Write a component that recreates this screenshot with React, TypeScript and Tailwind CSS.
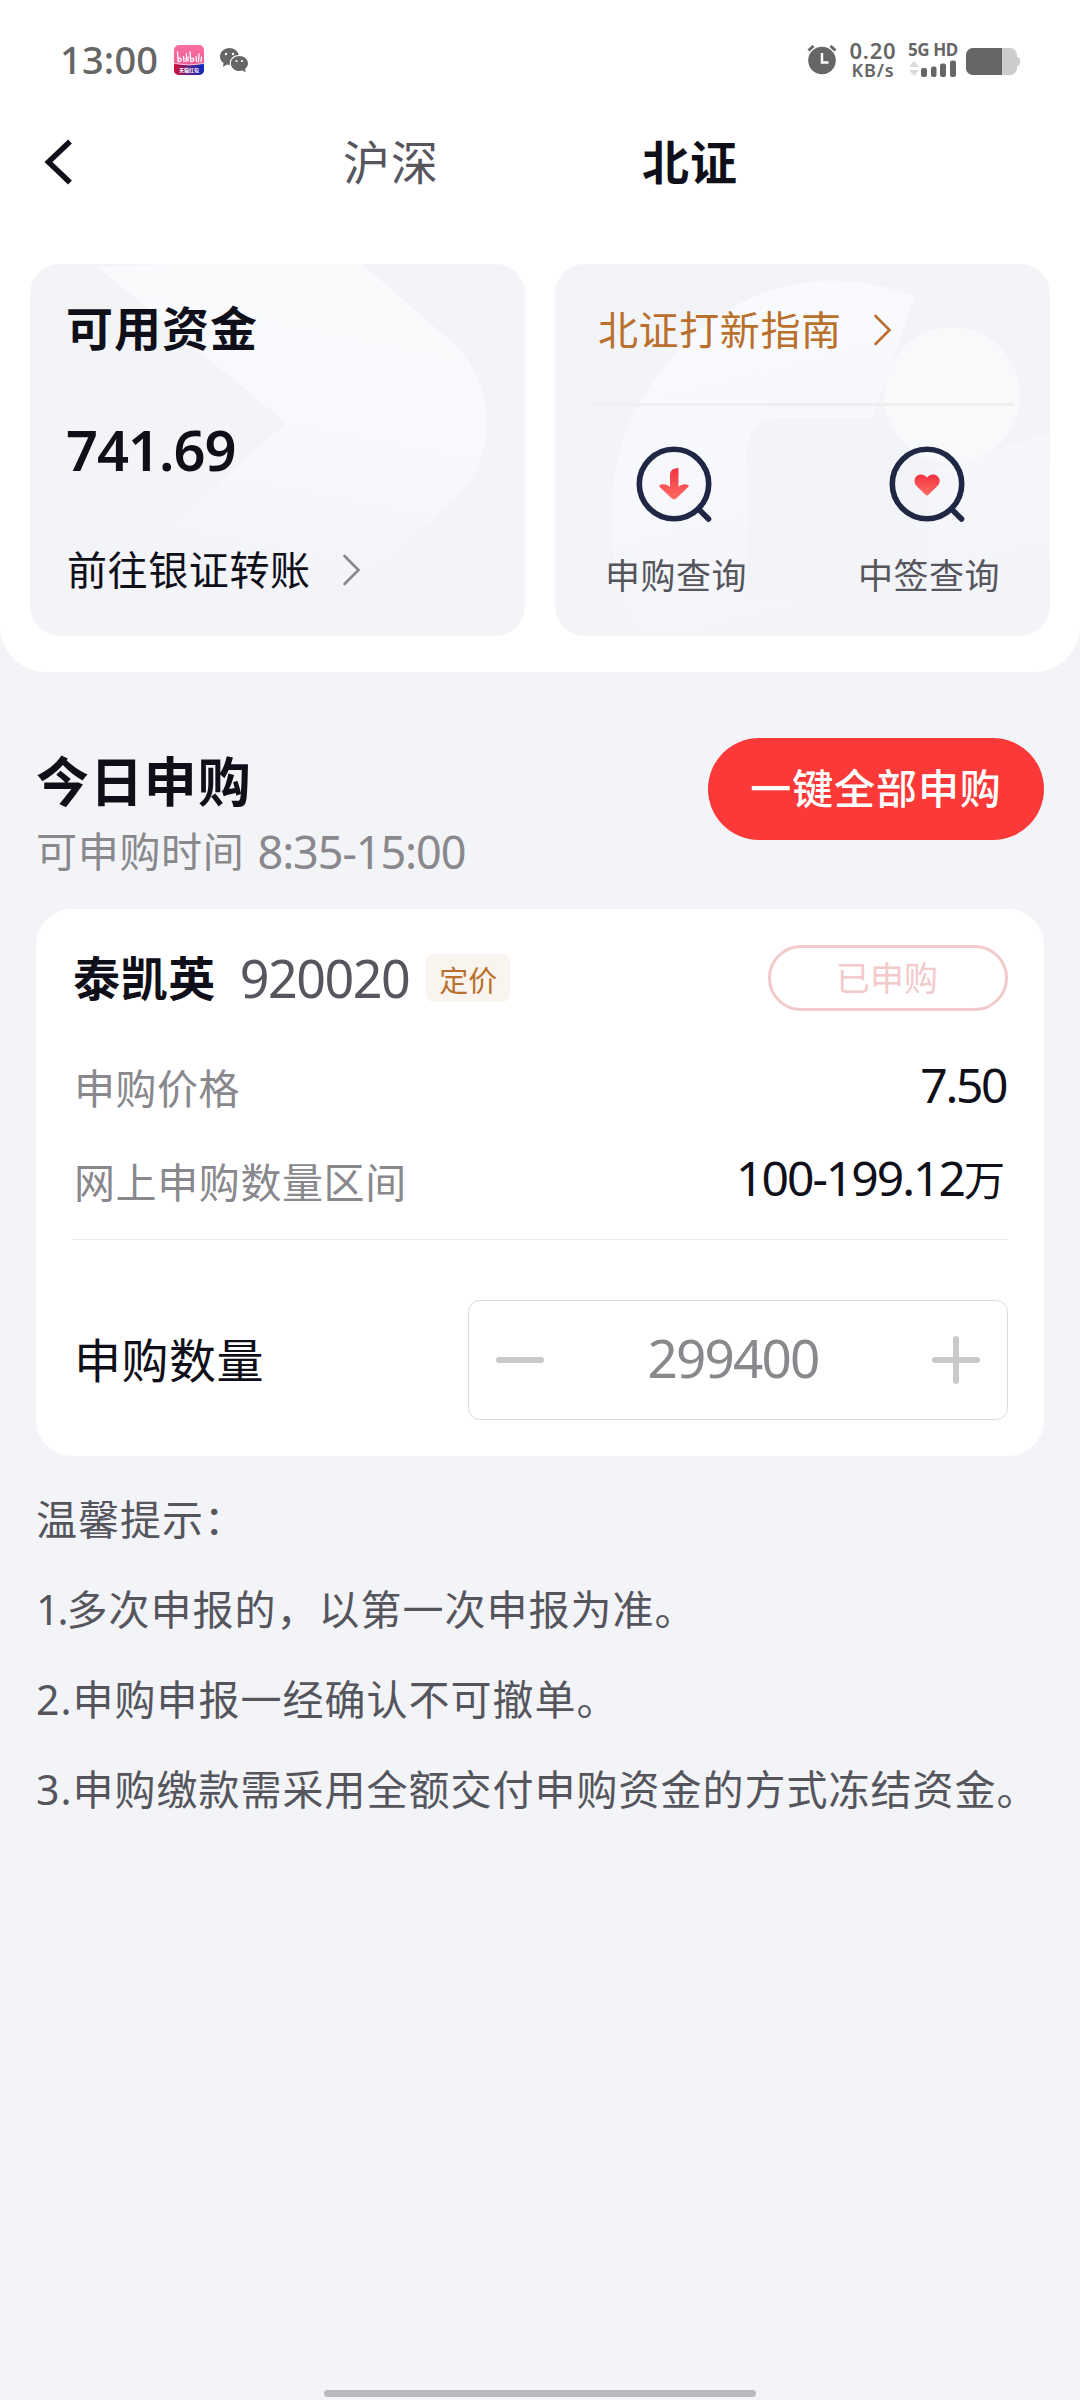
import React from "react";

const CJK = "font-['Noto_Sans','Noto_Sans_CJK_SC',sans-serif]";

function StatusBar() {
  return (
    <div className="flex h-[120px] items-start pt-[39px] pl-[60px] text-[#666]">
      <div className="h-10 w-[114px] text-[38px] leading-10 font-medium tracking-[0.2px]">13:00</div>
      <svg className="mt-[6px] h-[30px] w-[30px]" viewBox="0 0 30 30">
        <defs>
          <linearGradient id="pink" x1="0" y1="0" x2="0" y2="1">
            <stop offset="0" stopColor="#fb6fa0" />
            <stop offset="1" stopColor="#f0508c" />
          </linearGradient>
          <linearGradient id="ribbon" x1="0" y1="0" x2="1" y2="0">
            <stop offset="0" stopColor="#d90a35" />
            <stop offset="0.5" stopColor="#5a1c86" />
            <stop offset="1" stopColor="#0a2fc4" />
          </linearGradient>
          <clipPath id="tile">
            <rect width="30" height="30" rx="5" />
          </clipPath>
        </defs>
        <g clipPath="url(#tile)">
          <rect width="30" height="30" fill="url(#pink)" />
          <path d="M0 18.500Q15 21.500 30 18.500V30H0Z" fill="url(#ribbon)" />
          <path d="M0 18.500Q15 21.500 30 18.500" fill="none" stroke="#fff" strokeWidth="0.7" />
          <g fill="none" stroke="#fff" strokeWidth="1.300" strokeLinecap="round">
            <path d="M3.500 7l.7 9.500M4.200 16.500c4 .5 4-4.500 0-3M9.500 11.500l.5 5M12.500 9l-.5 7.500M16 7l.7 9.500M16.700 16.500c4 .5 4-4.500 0-3M22 11.500l.5 5M25 9l-.5 7.500M27.500 12l-.5 4.500M14 12v4" />
          </g>
        </g>
        <text x="15" y="27" textAnchor="middle" fontSize="5" fontWeight="700" fill="#fff">天猫红包</text>
      </svg>
      <svg className="mt-[9px] ml-4 h-6 w-7" viewBox="0 0 28 24">
        <path d="M9.500 0C4.200 0 0 3.800 0 8.500c0 2.700 1.400 5 3.500 6.500L3 19l4-2.500c1 .3 2 .4 3 .4C9 11.500 13 7 18.800 7 18 3 14 0 9.500 0Z" fill="#666" />
        <path d="M19.300 8c-4.700 0-8.400 3.300-8.400 7.500s3.700 7.600 8.400 7.600c1.100 0 2-.2 3-.5l3.400 1.700-.7-3.300c1.800-1.400 3-3.300 3-5.500 0-4.200-4-7.500-8.700-7.500Z" fill="#666" />
        <g fill="#fff">
          <circle cx="6" cy="6" r="1.200" /><circle cx="13" cy="6" r="1.200" />
          <circle cx="16.500" cy="13" r="1.100" /><circle cx="22" cy="13" r="1.100" />
        </g>
      </svg>
      <svg className="mt-[6px] ml-[559px] h-[30px] w-[30px]" viewBox="0 0 30 30">
        <circle cx="15" cy="15.500" r="13.800" fill="#666" />
        <path d="M1.500 5.500l5-4.500M23.500 1l5 4.500" stroke="#666" strokeWidth="3" />
        <path d="M15 8v9.500h6.500" fill="none" stroke="#fff" strokeWidth="2.500" />
      </svg>
      <div className="mt-px ml-[10px] flex w-[52px] flex-col items-center font-semibold">
        <span className="text-[22px] leading-[20px] tracking-[0.800px]">0.20</span>
        <span className="text-[18px] leading-[20px] tracking-[0.900px]">KB/s</span>
      </div>
      <div className="ml-[8px] w-[50px]">
        <div className="pl-px text-[17px] leading-[21px] font-bold tracking-[-0.400px] whitespace-nowrap">5G HD</div>
        <svg className="h-[18px] w-[50px]" viewBox="0 0 50 18">
          <path d="M2 7l5-6 5 6ZM2 10h10l-5 6Z" fill="#d9d9d9" />
          <g fill="#666">
            <rect x="14" y="8" width="6" height="9" rx="2" />
            <rect x="24" y="6.500" width="5.500" height="10.500" rx="2" />
            <rect x="33" y="3.500" width="6" height="13.500" rx="2" />
            <rect x="43" y="0.500" width="6" height="16.500" rx="2" />
          </g>
        </svg>
      </div>
      <div className="mt-[9px] ml-[9px] flex items-center">
        <div className="h-[27px] w-[51px] overflow-hidden rounded-[7px] bg-[#ccc]">
          <div className="h-full w-9 bg-[#666]" />
        </div>
        <div className="h-[9px] w-[3px] rounded-r bg-[#ccc]" />
      </div>
    </div>
  );
}

function Chevron({ color }: { color: string }) {
  return (
    <svg className="h-[34px] w-[20px]" viewBox="0 0 20 34" fill="none" stroke={color} strokeWidth="2.600" strokeLinecap="round">
      <path d="M2.500 3l14 14-14 14" />
    </svg>
  );
}

function FundsCard() {
  return (
    <div className="relative h-[372px] w-[495px] overflow-hidden rounded-[30px] bg-[#f3f4f8]">
      <svg className="absolute inset-0 h-full w-full" viewBox="0 0 495 372">
        <defs>
          <linearGradient id="fade1" gradientUnits="userSpaceOnUse" x1="280" y1="60" x2="230" y2="310">
            <stop offset="0" stopColor="#f9fafc" />
            <stop offset="0.400" stopColor="#f7f9fc" />
            <stop offset="1" stopColor="#f3f4f8" />
          </linearGradient>
        </defs>
        <path d="M68 3L140 0H332L417 74C445 98 457 128 457 159C457 195 440 225 412 248L300 345L100 300L256 159Z" fill="url(#fade1)" />
      </svg>
      <div className="relative pl-[37px] text-[#0f0f19]">
        <div className="-ml-px mt-[34px] h-[60px] text-[47px] leading-[60px] font-semibold tracking-[1px]">可用资金</div>
        <div className="-ml-px mt-[61px] h-[60px] text-[56px] leading-[60px] font-semibold tracking-[-1px]">741.69</div>
        <div className="mt-[61px] flex h-[60px] items-center">
          <span className="text-[40px] leading-[60px] tracking-[0.600px]">前往银证转账</span>
          <span className="ml-[31px]"><Chevron color="#88888d" /></span>
        </div>
      </div>
    </div>
  );
}

function Lens({ kind }: { kind: "arrow" | "heart" }) {
  return (
    <svg className="h-[80px] w-[80px]" viewBox="0 0 80 80">
      <defs>
        <linearGradient id="red" x1="0" y1="0" x2="0" y2="1">
          <stop offset="0" stopColor="#f3323f" />
          <stop offset="1" stopColor="#ff6b66" />
        </linearGradient>
      </defs>
      <g fill="none" stroke="#1f2745" strokeWidth="5.600">
        <circle cx="40" cy="40" r="34.700" />
        <path d="M65 65.500l9.500 9.500" strokeLinecap="round" />
      </g>
      {kind === "arrow" ? (
        <path d="M44.500 24V43C46.500 41 49.500 40 52.500 40.500C54.500 40.800 55.500 41.800 54 43.300L42.500 54.300Q40 56.500 37.500 54.300L26 43.300C24.500 41.800 25.500 40.800 27.500 40.500C30.500 40 34 41 36 43V31Q36 24 44.500 24Z" fill="url(#red)" />
      ) : (
        <path d="M40 33.500C35.500 28 27.500 30.500 27.500 37Q27.500 40 30 42.500L38.500 50.800Q40 52.200 41.500 50.800L50 42.500Q52.800 40 52.800 37C52.500 30.500 44.500 28 40 33.500Z" fill="url(#red)" />
      )}
    </svg>
  );
}

function GuideCard() {
  return (
    <div className="relative h-[372px] w-[495px] overflow-hidden rounded-[30px] bg-[#f3f4f8]">
      <svg className="absolute inset-0 h-full w-full" viewBox="0 0 495 372">
        <defs>
          <linearGradient id="fade2" gradientUnits="userSpaceOnUse" x1="220" y1="20" x2="310" y2="372">
            <stop offset="0" stopColor="#f9fafc" />
            <stop offset="0.450" stopColor="#f6f8fc" />
            <stop offset="1" stopColor="#f3f4f8" />
          </linearGradient>
        </defs>
        <path
          fillRule="evenodd"
          d="M360 32C270 0 190 20 130 80C65 145 45 220 62 310Q70 350 85 372H470Q485 340 495 290V168L374 209V310Q374 336 348 336H192V186Q194 154 226 154H317Z"
          fill="url(#fade2)"
        />
        <circle cx="397" cy="131" r="68" fill="#f8f9fb" />
      </svg>
      <div className="relative">
        <div className="mt-[36px] ml-[43px] flex h-[60px] items-center text-[#b9702d]">
          <span className="text-[40px] leading-[60px] tracking-[0.600px]">北证打新指南</span>
          <span className="ml-[31px]"><Chevron color="#b9702d" /></span>
        </div>
        <div className="mt-[43px] ml-[36px] h-[3px] w-[423px] bg-[#eeefef]" />
        <div className="mt-[38px] flex justify-between px-[50px] text-[35px] text-[#55565d]">
          <div className="flex w-[142px] flex-col items-center">
            <div className="-ml-[4px] h-[80px]"><Lens kind="arrow" /></div>
            <span className="mt-[30px] leading-[44px] tracking-[0.5px]">申购查询</span>
          </div>
          <div className="flex w-[142px] flex-col items-center">
            <div className="-ml-[5px] h-[80px]"><Lens kind="heart" /></div>
            <span className="mt-[30px] leading-[44px] tracking-[0.5px]">中签查询</span>
          </div>
        </div>
      </div>
    </div>
  );
}

function StockCard() {
  return (
    <div className="mx-9 mt-[21px] h-[547px] rounded-[36px] bg-white px-9 pt-9">
      <div className="flex h-[66px] items-center">
        <span className="ml-px text-[47px] leading-[66px] font-bold tracking-[0.600px] text-[#0f0f19]">泰凯英</span>
        <span className="ml-[24px] text-[52px] leading-[66px] tracking-[-1.500px] text-[#56565e]">920020</span>
        <span className="ml-[17px] flex h-12 w-[84px] items-center justify-center rounded-lg bg-[#f9f4ee] pt-[5px] text-[29px] text-[#b9702d]">定价</span>
        <span className="ml-auto flex h-[66px] w-[240px] items-center justify-center rounded-full border-[3px] border-[#f3caca] pr-[2px] text-[34px] text-[#f3caca]">已申购</span>
      </div>
      <div className="mt-[45px] flex h-[66px] items-center justify-between">
        <span className="ml-[2px] text-[41px] tracking-[0.500px] text-[#88888d]">申购价格</span>
        <span className="-mt-[8px] mr-[2px] text-[48px] tracking-[-2.400px] text-[#0f0f19]">7.50</span>
      </div>
      <div className="mt-[28px] flex h-[66px] items-center justify-between">
        <span className="ml-[2px] text-[41px] tracking-[0.600px] text-[#88888d]">网上申购数量区间</span>
        <span className="-mt-[10px] text-[48px] tracking-[-2px] text-[#0f0f19]">100-199.12<span className="mr-[5px] text-[41px]">万</span></span>
      </div>
      <div className="mt-[23px] h-px bg-[#ebebeb]" />
      <div className="mt-[60px] flex h-[120px] items-center justify-between">
        <span className="ml-[2px] text-[47px] tracking-[0.500px] text-[#0f0f19]">申购数量</span>
        <div className="flex h-[120px] w-[540px] items-center justify-between rounded-[12px] border border-[#dcdcdc] px-[27px]">
          <svg className="h-12 w-12" viewBox="0 0 48 48" stroke="#cacaca" strokeWidth="6" strokeLinecap="round"><path d="M3 24h42" /></svg>
          <span className="mr-[10px] -mt-[5px] text-[53px] tracking-[-1.800px] text-[#88888d]">299400</span>
          <svg className="h-12 w-12" viewBox="0 0 48 48" stroke="#cacaca" strokeWidth="6" strokeLinecap="round"><path d="M3 24h42M24 3v42" /></svg>
        </div>
      </div>
    </div>
  );
}

export default function App() {
  return (
    <div lang="zh-CN" className={`flex h-[2400px] w-[1080px] flex-col overflow-hidden bg-[#f3f4f8] ${CJK}`}>
      <header className="h-[672px] shrink-0 rounded-b-[46px] bg-white">
        <StatusBar />
        <div className="flex h-[84px] items-center pl-[42px] text-[47px] leading-[84px] tracking-[1px]">
          <svg className="h-12 w-8" viewBox="0 0 32 48" fill="none" stroke="#0f0f19" strokeWidth="5.500"><path d="M28 3.500L6.500 24 28 44.500" /></svg>
          <span className="ml-[269px] text-[#56565e]">沪深</span>
          <span className="ml-[203px] font-bold text-[#0f0f19]">北证</span>
        </div>
        <div className="mt-[60px] flex justify-between px-[30px]">
          <FundsCard />
          <GuideCard />
        </div>
      </header>
      <section className="mt-[66px] flex h-[150px] justify-between px-9">
        <div>
          <h1 className="mt-[9px] text-[53px] leading-[70px] font-bold tracking-[0.900px] text-[#0f0f19]">今日申购</h1>
          <p className="flex h-[70px] items-center whitespace-pre text-[#88888d]">
            <span className="text-[41px] tracking-[0.700px]">可申购时间</span>
            <span className="ml-[13px] text-[45px] tracking-[-1.100px]">8:35-15:00</span>
          </p>
        </div>
        <button className="h-[102px] w-[336px] rounded-full bg-[#fa3938] text-[41px] font-medium tracking-[0.900px] text-white">一键全部申购</button>
      </section>
      <StockCard />
      <div className="mt-[18px] pl-[36px] text-[41px] leading-[90px] tracking-[1px] text-[#55565d]">
        <p>温馨提示：</p>
        <p><span className="tracking-[-2px]">1.</span>多次申报的，以第一次申报为准。</p>
        <p>2.申购申报一经确认不可撤单。</p>
        <p className="whitespace-nowrap">3.申购缴款需采用全额交付申购资金的方式冻结资金。</p>
      </div>
      <div className="mx-auto mt-auto mb-[3px] h-[7px] w-[432px] rounded-full bg-[#b8b9bd]" />
    </div>
  );
}
